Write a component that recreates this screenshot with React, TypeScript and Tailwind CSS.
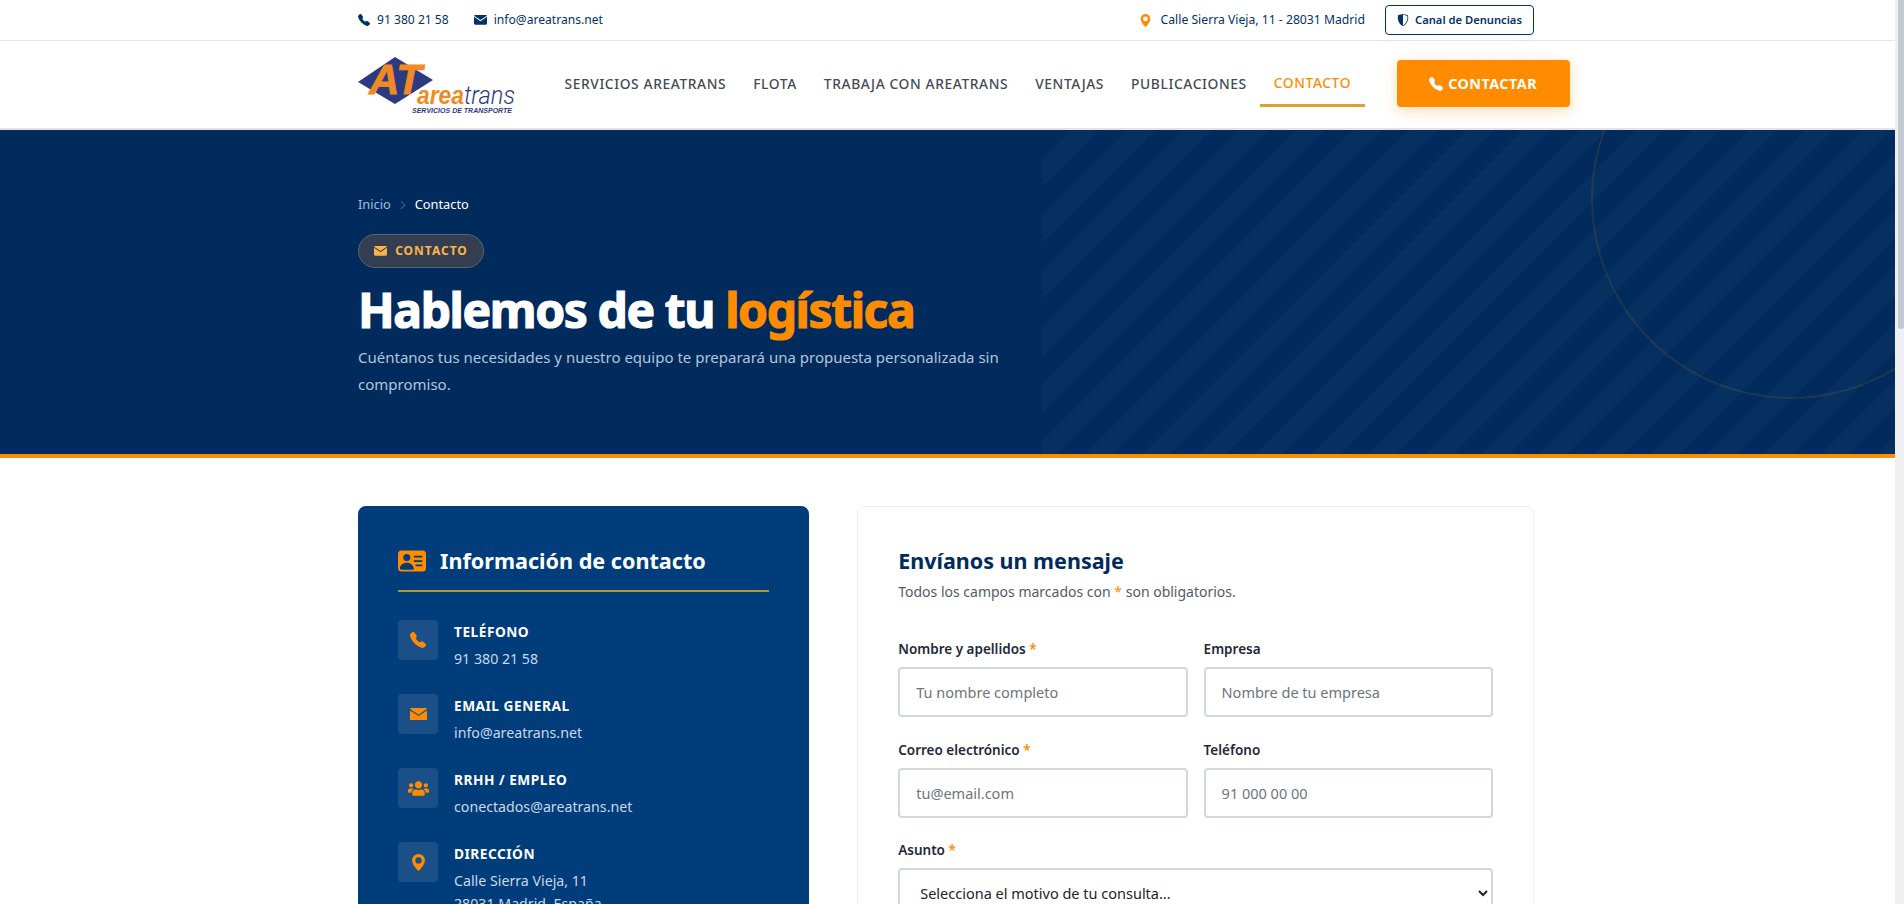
import React from 'react';
import {
  BsTelephoneFill,
  BsGeoAltFill,
  BsShieldShaded,
  BsPersonVcardFill,
  BsChevronRight,
} from 'react-icons/bs';
import { FaUsers } from 'react-icons/fa';

const navLinks = ['SERVICIOS AREATRANS', 'FLOTA', 'TRABAJA CON AREATRANS', 'VENTAJAS', 'PUBLICACIONES'];

const Envelope: React.FC<{ className?: string }> = ({ className }) => (
  <svg viewBox="0 0 16 12" fill="currentColor" className={className}>
    <path d="M1.5 0h13c.7 0 1.2.4 1.4 1L8 6.3.1 1C.3.4.8 0 1.5 0z" />
    <path d="M0 2.3v8.2C0 11.3.7 12 1.5 12h13c.8 0 1.5-.7 1.5-1.5V2.3L8 7.6z" />
  </svg>
);

const contactItems = [
  { label: 'Teléfono', lines: ['91 380 21 58'], icon: <BsTelephoneFill className="text-[16px]" /> },
  { label: 'Email general', lines: ['info@areatrans.net'], icon: <Envelope className="w-[17px]" /> },
  { label: 'RRHH / Empleo', lines: ['conectados@areatrans.net'], icon: <FaUsers className="text-[21px]" /> },
  { label: 'Dirección', lines: ['Calle Sierra Vieja, 11', '28031 Madrid, España'], icon: <BsGeoAltFill className="text-[17px]" /> },
];

const Container: React.FC<{ className?: string; children: React.ReactNode }> = ({ className, children }) => (
  <div className={`ml-[358px] w-[1176px] ${className ?? ''}`}>{children}</div>
);

const Logo = () => (
  <svg width="160" height="64" viewBox="0 0 160 64" className="block">
    <polygon points="0,28 37,3 75,26 37,50" fill="#2d3a80" />
    <text x="11" y="40" fontFamily="Liberation Sans" fontWeight="700" fontStyle="italic" fontSize="42" fill="#f08a24" stroke="#f08a24" strokeWidth="0.8" textLength="53" lengthAdjust="spacingAndGlyphs">AT</text>
    <text x="59" y="50" fontFamily="Liberation Sans" fontWeight="700" fontStyle="italic" fontSize="25" fill="#f08a24" textLength="47" lengthAdjust="spacingAndGlyphs">area</text>
    <text x="106" y="50" fontFamily="Roboto" fontWeight="300" fontStyle="italic" fontSize="25" fill="#2d3a80" textLength="51" lengthAdjust="spacingAndGlyphs">trans</text>
    <text x="54" y="58.5" fontFamily="Liberation Sans" fontWeight="700" fontStyle="italic" fontSize="6.5" fill="#2d3a80" textLength="100" lengthAdjust="spacingAndGlyphs">SERVICIOS DE TRANSPORTE</text>
  </svg>
);

const Field: React.FC<{ label: string; required?: boolean; placeholder: string }> = ({ label, required, placeholder }) => (
  <div>
    <label className="mb-[6px] block text-[13.5px] font-semibold leading-[24px] text-[#1f2937]">
      {label}
      {required && <span className="text-[#ff8c00]"> *</span>}
    </label>
    <input
      className="h-[50px] w-full rounded-[4px] border-2 border-[#d3d6da] bg-white px-4 text-[14.5px] outline-none placeholder:text-[#6c757d]"
      placeholder={placeholder}
      readOnly
    />
  </div>
);

export default function App() {
  return (
    <div className="flex h-[904px] w-full overflow-hidden bg-white font-['Noto_Sans','Open_Sans',sans-serif]">
      <main className="w-[1895px] shrink-0">
        <div className="h-[41px] border-b border-[#e3e5e8]">
          <Container className="flex h-10 items-center justify-between text-[12.1px] text-[#003366]">
            <div className="flex items-center">
              <BsTelephoneFill className="mr-[7px] text-[12px]" />
              <span>91 380 21 58</span>
              <Envelope className="ml-[25px] mr-[7px] w-[13px]" />
              <span>info@areatrans.net</span>
            </div>
            <div className="flex items-center">
              <BsGeoAltFill className="mr-[9px] text-[13px] text-[#ff8c00]" />
              <span className="text-[12.2px]">Calle Sierra Vieja, 11 - 28031 Madrid</span>
              <a className="ml-5 flex h-[30px] w-[149px] items-center justify-center rounded-[4px] border border-[#003366] text-[11.2px] font-semibold">
                <BsShieldShaded className="mr-[6px] text-[12px]" />
                Canal de Denuncias
              </a>
            </div>
          </Container>
        </div>

        <header className="h-[89px] border-b-2 border-[#e3e5e8]">
          <Container className="flex h-[87px] items-center">
            <div className="w-[193px] shrink-0 pt-[2px]">
              <Logo />
            </div>
            <nav className="flex h-full shrink-0 items-center whitespace-nowrap pb-[1px]">
              {navLinks.map((link) => (
                <a key={link} className="px-[13.5px] text-[13.8px] font-medium tracking-[0.6px] text-[#444b54]">
                  {link}
                </a>
              ))}
              <a className="mb-[20px] flex h-[46px] items-center self-end border-b-[3px] border-[#e0a030] px-[13.5px] pt-[1px] text-[13.8px] font-medium tracking-[0.6px] text-[#ff8c00]">
                CONTACTO
              </a>
            </nav>
            <button className="mb-[2px] ml-8 flex h-[47px] w-[173px] shrink-0 items-center justify-center rounded-[4px] bg-[#ff8c00] text-[14.3px] font-bold tracking-[0.5px] text-white shadow-[0_4px_14px_rgba(255,140,0,0.3)]">
              <BsTelephoneFill className="mr-[5px] text-[14px]" />
              CONTACTAR
            </button>
          </Container>
        </header>

        <section className="relative h-[328px] overflow-hidden border-b-4 border-[#ff8c00] bg-[#002b5c]">
          <div className="absolute right-0 top-0 h-full w-[45%] bg-[repeating-linear-gradient(135deg,transparent,transparent_20px,rgba(255,255,255,0.025)_20px,rgba(255,255,255,0.025)_40px)]" />
          <div className="absolute right-[-96px] top-[-131px] h-[400px] w-[400px] rounded-full border-2 border-[rgba(255,140,0,0.12)]" />
          <Container className="relative pt-[65px]">
            <div className="flex h-5 items-center text-[12.8px] text-white">
              <span className="text-[#a3bcdc]">Inicio</span>
              <BsChevronRight className="mx-[7px] text-[10px] text-[#5f7fa3]" />
              <span>Contacto</span>
            </div>
            <div className="mt-[19px] flex h-[34px] w-[126px] items-center justify-center rounded-full border border-[#5a6472] bg-[#333f50] text-[12px] font-bold tracking-[1px] text-[#ffb347]">
              <Envelope className="mr-[8px] w-[13px]" />
              CONTACTO
            </div>
            <h1 className="mt-[13px] text-[48px] font-bold leading-[58px] tracking-[-1.4px] text-white [-webkit-text-stroke:1.2px_currentColor]">
              Hablemos de tu <span className="text-[#ff8c00]">logística</span>
            </h1>
            <p className="mt-[5px] max-w-[690px] text-[15px] leading-[27px] text-[#b4c5d9]">
              Cuéntanos tus necesidades y nuestro equipo te preparará una propuesta personalizada sin compromiso.
            </p>
          </Container>
        </section>

        <Container className="mt-12 grid grid-cols-[2fr_3fr] items-start gap-12">
          <aside className="rounded-lg bg-[#003d7a] px-10 pb-10 pt-[35px]">
            <div className="flex items-center border-b-2 border-[#b8923a] pb-[9px]">
              <BsPersonVcardFill className="mr-[14px] text-[28px] text-[#ff8c00]" />
              <h2 className="text-[21.6px] font-bold leading-[40px] text-white">Información de contacto</h2>
            </div>
            <ul className="mt-7 flex flex-col gap-[24px]">
              {contactItems.map((item) => (
                <li key={item.label} className="flex min-h-[50px]">
                  <div className="mr-[16px] flex h-10 w-10 shrink-0 items-center justify-center rounded-[4px] bg-[rgba(255,255,255,0.1)] text-[#ff8c00]">
                    {item.icon}
                  </div>
                  <div>
                    <div className="text-[13.7px] font-bold uppercase leading-[24px] tracking-[0.5px] text-white">{item.label}</div>
                    <div className="pt-[3px]">
                      {item.lines.map((line) => (
                        <div key={line} className="text-[14.2px] leading-[23px] text-[#c9d8ea]">{line}</div>
                      ))}
                    </div>
                  </div>
                </li>
              ))}
            </ul>
          </aside>

          <section className="rounded-lg border border-[#eceef0] bg-white p-10 pt-[34px]">
            <h2 className="text-[21.5px] font-bold leading-[40px] text-[#002b5c]">Envíanos un mensaje</h2>
            <p className="pt-[1px] text-[14px] leading-[20px] text-[#555b63]">
              Todos los campos marcados con <span className="text-[#ff8c00]">*</span> son obligatorios.
            </p>
            <div className="mt-[35px] grid grid-cols-2 gap-x-4 gap-y-[20.5px]">
              <Field label="Nombre y apellidos" required placeholder="Tu nombre completo" />
              <Field label="Empresa" placeholder="Nombre de tu empresa" />
              <Field label="Correo electrónico" required placeholder="tu@email.com" />
              <Field label="Teléfono" placeholder="91 000 00 00" />
              <div className="col-span-2">
                <label className="mb-[6px] block text-[13.5px] font-semibold leading-[24px] text-[#1f2937]">
                  Asunto <span className="text-[#ff8c00]">*</span>
                </label>
                <select className="h-[50px] w-full rounded-[4px] border-2 border-[#d3d6da] bg-white px-4 text-[14.5px] text-[#212529] outline-none" defaultValue="">
                  <option value="">Selecciona el motivo de tu consulta...</option>
                </select>
              </div>
            </div>
          </section>
        </Container>
      </main>

      <div className="flex-1 bg-[#eff0f1] pl-[3px]">
        <div className="h-[329px] rounded-b-[3px] bg-[#c3cad2]" />
      </div>
    </div>
  );
}
